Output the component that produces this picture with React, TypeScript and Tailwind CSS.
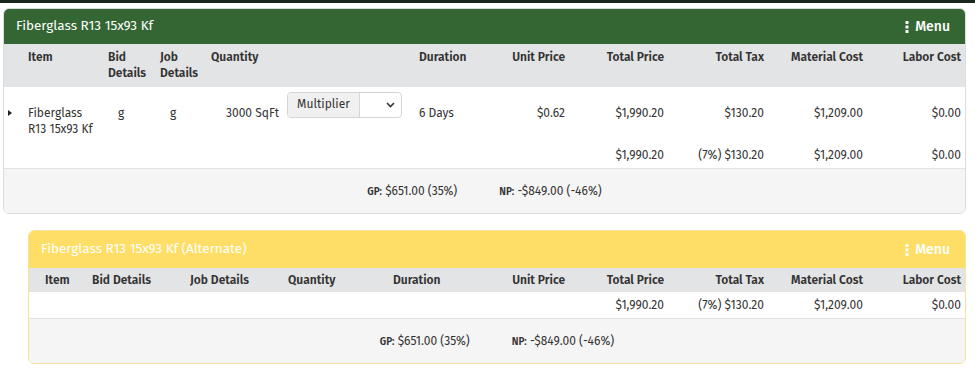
import React from 'react';

const font = { fontFamily: '"Fira Sans", Lato, "Open Sans", sans-serif' };

function MenuButton() {
  return (
    <div className="flex items-center gap-[6px] text-white text-[14px] font-medium">
      <svg width="4" height="12" viewBox="0 0 4 12" fill="currentColor">
        <rect x="0.5" y="0" width="3" height="3" />
        <rect x="0.5" y="4.5" width="3" height="3" />
        <rect x="0.5" y="9" width="3" height="3" />
      </svg>
      <span>Menu</span>
    </div>
  );
}

function Footer() {
  return (
    <div className="flex flex-1 justify-center items-center gap-[42px] bg-[#f5f5f5] border-t border-[#e2e2e2] text-[12px] text-[#333]">
      <span>
        <b className="text-[10px] font-semibold">GP:</b> $651.00 (35%)
      </span>
      <span>
        <b className="text-[10px] font-semibold">NP:</b> -$849.00 (-46%)
      </span>
    </div>
  );
}

const mainCols = 'grid grid-cols-[20px_80px_52px_51px_76px_132px_55px_99px_99px_100px_99px_1fr]';
const altCols = 'grid grid-cols-[12px_47px_98px_98px_105px_81px_99px_99px_100px_99px_1fr]';

function MainCard() {
  return (
    <div className="ml-[3px] mr-[9px] mt-[5px] border border-[#dcdcdc] rounded-[6px] overflow-hidden">
      <div className="h-[35px] bg-[#336633] flex items-center justify-between pl-[12px] pr-[15px]">
        <span className="text-white text-[13.5px] font-normal">Fiberglass R13 15x93 Kf</span>
        <MenuButton />
      </div>
      <div className={`${mainCols} h-[43px] bg-[#e3e4e6] text-[12px] font-semibold text-[#333] leading-[16px] pt-[5px]`}>
        <div />
        <div className="px-1">Item</div>
        <div className="px-1">Bid Details</div>
        <div className="px-1">Job Details</div>
        <div className="px-1 col-span-2">Quantity</div>
        <div className="px-1">Duration</div>
        <div className="px-1 text-right">Unit Price</div>
        <div className="px-1 text-right">Total Price</div>
        <div className="px-1 text-right">Total Tax</div>
        <div className="px-1 text-right">Material Cost</div>
        <div className="px-1 text-right">Labor Cost</div>
      </div>
      <div className={`${mainCols} h-[54px] bg-white text-[12px] text-[#333] leading-[16px]`}>
        <div className="pt-[23px] pl-[4px]">
          <svg width="4" height="6" viewBox="0 0 4 6" fill="#222" className="block">
            <path d="M0 0L4 3L0 6Z" />
          </svg>
        </div>
        <div className="px-1 pt-[18px]">Fiberglass R13 15x93 Kf</div>
        <div className="pl-[14px] pt-[18px]">g</div>
        <div className="pl-[14px] pt-[18px]">g</div>
        <div className="px-1 pt-[18px] text-right">3000 SqFt</div>
        <div className="px-1 pt-[5px]">
          <div className="flex h-[26px] w-[115px] border border-[#d4d4d4] rounded-[4px] overflow-hidden">
            <div className="w-[72px] bg-[#f0f0f0] border-r border-[#d4d4d4] flex justify-center pt-[3px]">Multiplier</div>
            <div className="flex-1 flex items-center justify-end pr-[6px]">
              <svg width="9" height="6" viewBox="0 0 9 6" fill="none" stroke="#333" strokeWidth="1.6">
                <path d="M1 1l3.5 3.5L8 1" />
              </svg>
            </div>
          </div>
        </div>
        <div className="px-1 pt-[18px]">6 Days</div>
        <div className="px-1 pt-[18px] text-right">$0.62</div>
        <div className="px-1 pt-[18px] text-right">$1,990.20</div>
        <div className="px-1 pt-[18px] text-right">$130.20</div>
        <div className="px-1 pt-[18px] text-right">$1,209.00</div>
        <div className="px-1 pt-[18px] text-right">$0.00</div>
      </div>
      <div className={`${mainCols} h-[27px] bg-white text-[12px] text-[#333] leading-[16px] items-center`}>
        <div className="col-span-8" />
        <div className="px-1 text-right">$1,990.20</div>
        <div className="px-1 text-right">(7%) $130.20</div>
        <div className="px-1 text-right">$1,209.00</div>
        <div className="px-1 text-right">$0.00</div>
      </div>
      <div className="h-[45px] flex">
        <Footer />
      </div>
    </div>
  );
}

function AltCard() {
  return (
    <div className="ml-[28px] mr-[9px] mt-[16px] border border-[#f7e29a] rounded-[6px] overflow-hidden">
      <div className="h-[37px] bg-[#fede66] flex items-center justify-between pl-[12px] pr-[15px]">
        <span className="text-white text-[13.5px] font-normal">Fiberglass R13 15x93 Kf (Alternate)</span>
        <MenuButton />
      </div>
      <div className={`${altCols} h-[24px] bg-[#e3e4e6] text-[12px] font-semibold text-[#333] items-center`}>
        <div />
        <div className="px-1">Item</div>
        <div className="px-1">Bid Details</div>
        <div className="px-1">Job Details</div>
        <div className="px-1">Quantity</div>
        <div className="px-1">Duration</div>
        <div className="px-1 text-right">Unit Price</div>
        <div className="px-1 text-right">Total Price</div>
        <div className="px-1 text-right">Total Tax</div>
        <div className="px-1 text-right">Material Cost</div>
        <div className="px-1 text-right">Labor Cost</div>
      </div>
      <div className={`${altCols} h-[26px] bg-white text-[12px] text-[#333] items-center`}>
        <div className="col-span-7" />
        <div className="px-1 text-right">$1,990.20</div>
        <div className="px-1 text-right">(7%) $130.20</div>
        <div className="px-1 text-right">$1,209.00</div>
        <div className="px-1 text-right">$0.00</div>
      </div>
      <div className="h-[45px] flex">
        <Footer />
      </div>
    </div>
  );
}

export default function App() {
  return (
    <div className="w-[975px] h-[375px] bg-white overflow-hidden" style={font}>
      <div className="h-[3px] bg-[#1b261b]" />
      <MainCard />
      <AltCard />
    </div>
  );
}
